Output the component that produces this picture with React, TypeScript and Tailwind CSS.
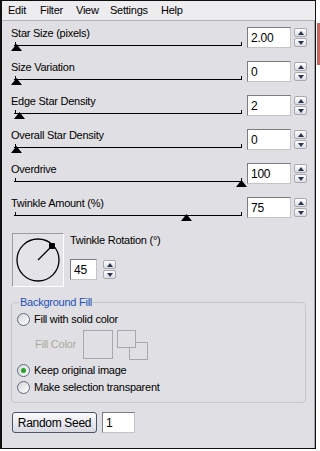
import React from 'react'

type Row = { label: string; value: string; thumb: number }

const rows: Row[] = [
  { label: 'Star Size (pixels)', value: '2.00', thumb: 2 },
  { label: 'Size Variation', value: '0', thumb: 2 },
  { label: 'Edge Star Density', value: '2', thumb: 5 },
  { label: 'Overall Star Density', value: '0', thumb: 2 },
  { label: 'Overdrive', value: '100', thumb: 227 },
  { label: 'Twinkle Amount (%)', value: '75', thumb: 172 },
]

const menu = [
  { name: 'Edit', w: 'w-[32px]' },
  { name: 'Filter', w: 'w-[36px]' },
  { name: 'View', w: 'w-[34px]' },
  { name: 'Settings', w: 'w-[51px]' },
  { name: 'Help', w: 'w-[30px]' },
]

function SpinBtn({ up }: { up?: boolean }) {
  return (
    <div className="flex h-[9px] w-[13px] items-center justify-center rounded-[2px] border border-[#a9a9b0] bg-linear-to-b from-white to-[#dcdce4]">
      <svg width="6" height="4" viewBox="0 0 6 4">
        <polygon points={up ? '3,0 6,4 0,4' : '0,0 6,0 3,4'} fill="#2b3550" />
      </svg>
    </div>
  )
}

function Spinner() {
  return (
    <div className="flex flex-col gap-px">
      <SpinBtn up />
      <SpinBtn />
    </div>
  )
}

function NumBox({ value, w }: { value: string; w: string }) {
  return (
    <div
      className={`${w} flex h-[21px] items-center border border-t-[#7c7c80] border-l-[#7c7c80] border-r-[#c4c4c8] border-b-[#c4c4c8] bg-white pl-[3px] text-[12px] leading-none`}
    >
      {value}
    </div>
  )
}

function Slider({ thumb }: { thumb: number }) {
  return (
    <div className="relative ml-[3px] h-[12px] w-[228px]">
      <div className="absolute left-0 right-0 top-[5px] h-px bg-black" />
      <div className="absolute left-[1px] top-[2px] h-[3px] w-px bg-black" />
      <div className="absolute right-0 top-[2px] h-[3px] w-px bg-black" />
      <svg
        className="absolute top-[4px]"
        style={{ left: thumb - 5.5 }}
        width="11"
        height="7"
        viewBox="0 0 11 7"
      >
        <polygon points="5.5,0 11,7 0,7" fill="#000" />
      </svg>
    </div>
  )
}

function Radio({ checked }: { checked?: boolean }) {
  return (
    <span className="flex h-[13px] w-[13px] shrink-0 items-center justify-center rounded-full border border-[#5d6b80] bg-linear-to-br from-[#d6d6da] to-white">
      {checked && <span className="h-[5px] w-[5px] rounded-full bg-[#27a327]" />}
    </span>
  )
}

export default function App() {
  return (
    <div className="flex h-[451px] w-[320px] bg-white font-['Liberation_Sans',Arial,sans-serif] text-[11px] tracking-[-0.25px] text-black">
      <div className="flex h-[449px] w-[316px] flex-col border-t border-l-2 border-r border-b border-[#111] bg-[#e0dfe3]">
        {/* menu bar */}
        <div className="flex h-[20px] items-center border-b border-[#b4b3b8] bg-[#edecef] pl-[6px]">
          {menu.map((m) => (
            <span key={m.name} className={m.w}>
              {m.name}
            </span>
          ))}
        </div>

        <div className="flex-1 border-r border-[#a8a8ac] pt-[6px]">
          {rows.map((r) => (
            <div key={r.label} className="flex h-[34px] pl-[9px]">
              <div className="w-[236px]">
                <div className="h-[13px] leading-[13px]">{r.label}</div>
                <Slider thumb={r.thumb} />
              </div>
              <NumBox value={r.value} w="w-[44px]" />
              <div className="ml-[3px] mt-[1px]">
                <Spinner />
              </div>
            </div>
          ))}

          {/* twinkle rotation */}
          <div className="mt-[2px] flex pl-[10px]">
            <div className="h-[54px] w-[52px] border border-t-[#9c9ba0] border-l-[#9c9ba0] border-r-white border-b-white bg-[#e4e3e7]">
              <svg width="50" height="52" viewBox="0 0 50 52">
                <circle cx="25" cy="26" r="21" fill="none" stroke="#000" strokeWidth="1.3" />
                <line x1="25" y1="26" x2="39" y2="12" stroke="#000" strokeWidth="1.3" />
                <rect x="36" y="9" width="6" height="6" rx="1" fill="#000" />
              </svg>
            </div>
            <div className="ml-[6px] pt-[1px]">
              <div className="leading-[13px]">Twinkle Rotation (°)</div>
              <div className="mt-[12px] flex">
                <NumBox value="45" w="w-[27px]" />
                <div className="ml-[6px] mt-[1px]">
                  <Spinner />
                </div>
              </div>
            </div>
          </div>

          {/* background fill */}
          <fieldset className="ml-[9px] mt-[9px] w-[295px] rounded-[4px] border border-[#c8c7c4] pb-[8px] pl-[5px] pt-[4px]">
            <legend className="ml-[2px] px-[1px] leading-[13px] text-[#1d4fb6]">Background Fill</legend>
            <div className="flex h-[13px] items-center gap-[4px]">
              <Radio />
              <span>Fill with solid color</span>
            </div>
            <div className="mt-[4px] flex h-[29px] items-center">
              <span className="ml-[18px] w-[48px] text-[#aca9a0]">Fill Color</span>
              <div className="h-[29px] w-[30px] border border-[#a8a8ac]" />
              <svg className="ml-[4px]" width="31" height="30" viewBox="0 0 31 30">
                <rect x="12.5" y="12.5" width="18" height="17" fill="#e0dfe3" stroke="#a8a8ac" />
                <rect x="0.5" y="0.5" width="18" height="17" fill="#e0dfe3" stroke="#a8a8ac" />
              </svg>
            </div>
            <div className="mt-[5px] flex h-[13px] items-center gap-[4px]">
              <Radio checked />
              <span>Keep original image</span>
            </div>
            <div className="mt-[4px] flex h-[13px] items-center gap-[4px]">
              <Radio />
              <span>Make selection transparent</span>
            </div>
          </fieldset>

          {/* random seed */}
          <div className="mt-[9px] flex items-center pl-[10px]">
            <button className="flex h-[21px] w-[85px] items-center justify-center rounded-[3px] border border-[#4a5468] bg-linear-to-b from-[#fbfbfd] to-[#d9d9e2] text-[12px] tracking-[-0.3px]">
              Random Seed
            </button>
            <div className="ml-[5px]">
              <NumBox value="1" w="w-[33px]" />
            </div>
          </div>
        </div>
      </div>
      <div className="w-[4px]">
        <div className="ml-px mt-[23px] h-[42px] w-[3px] bg-[#c7675f]" />
      </div>
    </div>
  )
}
